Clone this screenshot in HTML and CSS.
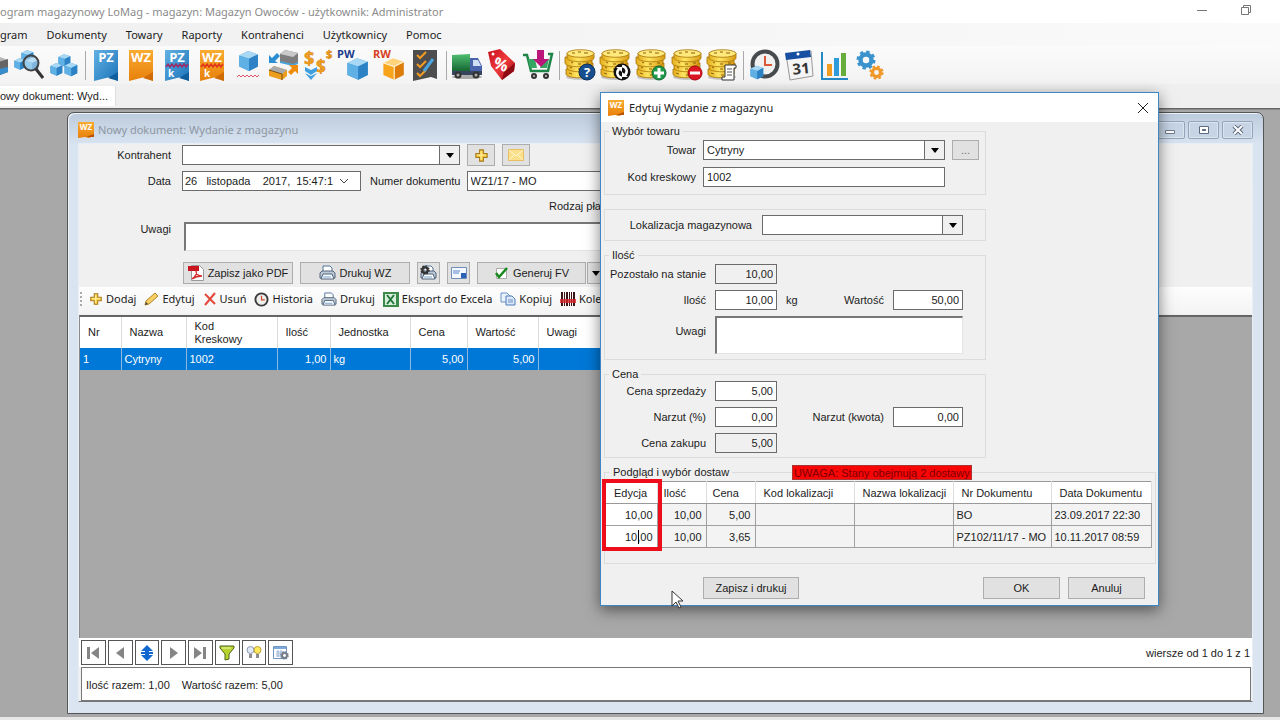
FILE: index.html
```html
<!DOCTYPE html>
<html lang="pl">
<head>
<meta charset="utf-8">
<title>LoMag</title>
<link rel="stylesheet" href="styles.css">
</head>
<body>
<svg class="sprites" aria-hidden="true">
  <defs>
    <linearGradient id="gBlue" x1="0" y1="0" x2="1" y2="1"><stop offset="0" stop-color="#63b1e4"/><stop offset="1" stop-color="#1a73b8"/></linearGradient>
    <linearGradient id="gOrange" x1="0" y1="0" x2="0" y2="1"><stop offset="0" stop-color="#f9ab32"/><stop offset="1" stop-color="#e8800a"/></linearGradient>
    <linearGradient id="gCoin" x1="0" y1="0" x2="1" y2="0"><stop offset="0" stop-color="#e2ac1c"/><stop offset=".4" stop-color="#ffe561"/><stop offset="1" stop-color="#d79a10"/></linearGradient>
    <linearGradient id="gGreen" x1="0" y1="0" x2="0" y2="1"><stop offset="0" stop-color="#4fbf71"/><stop offset="1" stop-color="#12612f"/></linearGradient>
    <linearGradient id="gRed" x1="0" y1="0" x2="1" y2="1"><stop offset="0" stop-color="#c80f1c"/><stop offset=".5" stop-color="#ef3b3f"/><stop offset="1" stop-color="#9d0711"/></linearGradient>
    <symbol id="cube" viewBox="0 0 20 20"><path d="M10 1 19 4v11l-8 4-9-4V5z" fill="#4c9dd6"/><path d="M10 1 19 4l-8 4-9-3z" fill="#a9d8f4"/><path d="M2 5l9 3v11l-9-4z" fill="#5fb0e4"/><path d="M11 8l8-4v11l-8 4z" fill="#2c82c4"/></symbol>
    <symbol id="cubeo" viewBox="0 0 20 20"><path d="M10 1 19 4l-8 4-9-3z" fill="#ffd27c"/><path d="M2 5l9 3v11l-9-4z" fill="#f7a31c"/><path d="M11 8l8-4v11l-8 4z" fill="#dd7c08"/><path d="M2 5l9 3 8-4M11 8v11" fill="none" stroke="#fff0cf"/></symbol>
    <symbol id="flagb" viewBox="0 0 24 31"><path d="M0 0h24v31l-8-4-16 4z" fill="url(#gBlue)"/><path d="M14 28l10-6v9z" fill="#0f5f9f"/></symbol>
    <symbol id="flago" viewBox="0 0 24 31"><path d="M0 0h24v31l-8-4-16 4z" fill="url(#gOrange)"/><path d="M14 28l10-6v9z" fill="#cf6c05"/></symbol>
    <symbol id="coins" viewBox="0 0 32 32"><ellipse cx="16" cy="28" rx="14" ry="3" fill="#999" opacity=".5"/><g fill="url(#gCoin)" stroke="#a87409" stroke-width=".8"><path d="M2 20v5c0 5 26 5 26 0v-5z"/><path d="M3 14v5c0 5 26 5 26 0v-5z"/><path d="M1 8v6c0 5 27 5 27 0V8z"/><path d="M3 4v5c0 5 27 5 27 0V4z"/><ellipse cx="16.500" cy="4.500" rx="13.500" ry="3.800" fill="#ffe97c"/></g><path d="M8 4h3m3-1h3m3 1h4M7 13l2 1m5 1h3m5-1h3M6 18l2 1m6 1h3m6-1h2M5 24l3 1m7 1h3m4-1h3" stroke="#8b5f05" fill="none"/></symbol>
    <symbol id="wz" viewBox="0 0 16 16"><path d="M0 0h16v14l-5 2-4-1-7 1z" fill="url(#gOrange)"/><path d="M8 15l8-3v3z" fill="#b65400"/><text x="8" y="8" class="svg-bold" font-size="8" text-anchor="middle" fill="#fff">WZ</text></symbol>
    <symbol id="plus" viewBox="0 0 16 16"><path d="M6 2h4v4h4v4h-4v4H6v-4H2V6h4z" fill="#fbd44c" stroke="#a9791a" stroke-width="1.200"/><path d="M7.500 3.500v9M3.500 7.500h9" stroke="#fff0a8"/></symbol>
    <symbol id="printer" viewBox="0 0 17 16"><path d="M4 7V1h7l2 2v4" fill="#fff" stroke="#54749a"/><path d="M1 8l2-2h11l2 2v5H1z" fill="#bdc9d6" stroke="#53657b"/><path d="M4 9h9l2 5H2z" fill="#f6fbff" stroke="#53657b"/><path d="M4 12h8" stroke="#7ea3ca"/></symbol>
    <symbol id="clock" viewBox="0 0 16 16"><circle cx="8" cy="8" r="6.500" fill="#eee" stroke="#3a3a3a" stroke-width="2"/><path d="M8 4v4.500h3.500" fill="none" stroke="#d14a28" stroke-width="1.300"/></symbol>
    <symbol id="gear" viewBox="0 0 20 20"><circle cx="10" cy="10" r="5.500" fill="none" stroke="currentColor" stroke-width="4.500"/><circle cx="10" cy="10" r="8.200" fill="none" stroke="currentColor" stroke-width="2.600" stroke-dasharray="3.400 3.040"/></symbol>
  </defs>
</svg>

<div class="app">
  <header class="titlebar">
    <span>ogram magazynowy LoMag - magazyn: Magazyn Owoców - użytkownik: Administrator</span>
    <div class="sysbuttons">
      <button aria-label="Minimalizuj"><svg width="12" height="12"><path d="M1 6.500h10" stroke="#777"/></svg></button>
      <button aria-label="Przywróć"><svg width="12" height="12" fill="none" stroke="#777"><path d="M1.500 3.500h7v7h-7zM3.500 3V1.500h7v7H9"/></svg></button>
    </div>
  </header>

  <nav class="menu">
    <button>gram</button><button>Dokumenty</button><button>Towary</button><button>Raporty</button><button>Kontrahenci</button><button>Użytkownicy</button><button>Pomoc</button>
  </nav>

  <div class="toolbar">
    <div class="tools tools-stock">
      <button aria-label="Magazyn"><svg width="32" height="32"><path d="M4 11l14-5 13 5v12l-13 5-14-7z" fill="#b5b5b5"/><path d="M18 14l13-4v13l-13 5z" fill="#666"/><path d="M18 21l13-3v5l-13 5z" fill="#398fce"/></svg></button>
      <button aria-label="Szukaj"><svg width="32" height="32"><use href="#cube" x="8" y="0" width="14" height="15"/><use href="#cube" x="1" y="8" width="13" height="14"/><use href="#cube" x="12" y="8" width="15" height="15"/><circle cx="19" cy="14" r="7.500" fill="#c8e3f388" stroke="#444" stroke-width="2"/><path d="M24 20l7 9" stroke="#333" stroke-width="3"/></svg></button>
      <button aria-label="Towary"><svg width="32" height="32"><use href="#cube" x="9" y="4" width="14" height="15"/><use href="#cube" x="1" y="13" width="14" height="15"/><use href="#cube" x="15" y="13" width="15" height="15"/></svg></button>
    </div>
    <i class="sep"></i>
    <div class="tools tools-docs">
      <button aria-label="PZ"><svg width="24" height="37" viewBox="0 -3 24 37"><use href="#flagb" width="24" height="31"/><text x="12" y="12" class="svg-bold" font-size="13" text-anchor="middle" fill="#fff">PZ</text></svg></button>
      <button aria-label="WZ"><svg width="24" height="37" viewBox="0 -3 24 37"><use href="#flago" width="24" height="31"/><text x="12" y="12" class="svg-bold" font-size="13" text-anchor="middle" fill="#fff">WZ</text></svg></button>
      <button aria-label="PZ k"><svg width="24" height="37" viewBox="0 -3 24 37"><use href="#flagb" width="24" height="31"/><text x="12" y="12" class="svg-bold" font-size="13" text-anchor="middle" fill="#fff">PZ</text><path d="M1 17l2-3 2 3 2-3 2 3 2-3 2 3 2-3 2 3 2-3 2 3 2-3" fill="none" stroke="#9a2c67" stroke-width="1.500"/><text x="6" y="27" class="svg-bold" font-size="10" text-anchor="middle" fill="#fff">k</text></svg></button>
      <button aria-label="WZ k"><svg width="24" height="37" viewBox="0 -3 24 37"><use href="#flago" width="24" height="31"/><text x="12" y="12" class="svg-bold" font-size="13" text-anchor="middle" fill="#fff">WZ</text><path d="M1 17l2-3 2 3 2-3 2 3 2-3 2 3 2-3 2 3 2-3 2 3 2-3" fill="none" stroke="#e0341c" stroke-width="1.500"/><text x="7" y="27" class="svg-bold" font-size="10" text-anchor="middle" fill="#fff">k</text></svg></button>
      <button aria-label="Korekta stanu"><svg width="24" height="32"><use href="#cube" x="1" y="1" width="22" height="22"/><path d="M1 28l2-2 2 2 2-2 2 2 2-2 2 2 2-2 2 2 2-2 2 2 2-2" fill="none" stroke="#d9526a"/></svg></button>
      <button aria-label="Przesunięcie"><svg width="32" height="32"><path d="M13 5l5-4 13 3v9l-5 3-13-3z" fill="#7d7d7d"/><path d="M13 5l5-4 13 3-5 4z" fill="#c9c9c9"/><path d="M13 12l13 3 5-2v2l-5 2-13-3z" fill="#4ba1d9"/><path d="M2 21l5-4 13 4v6l-5 4-13-4z" fill="#ed9d1b"/><path d="M2 21l5-4 13 4-5 4z" fill="#aaa"/><path d="M2 21l13 4v6" fill="none" stroke="#775014"/><path d="M2 14V6l3 3 5-5 3 3-5 5 3 2z" fill="#2a8ed0"/><path d="M31 16v9l-3-3-4 4-3-3 4-4-3-3z" fill="#f08c0a"/></svg></button>
      <button aria-label="Ceny"><svg width="30" height="38" viewBox="0 -3 30 38"><g class="svg-bold" fill="#f0a01e" stroke="#d5810b" stroke-width=".5"><text x="0" y="16" font-size="18">$</text><text x="12" y="24" font-size="17">$</text><text x="22" y="9" font-size="11">$</text></g><path d="M1 18l6 3 6-3v4l-6 4-6-4zM1 24l6 3 6-3-6 7z" fill="#3f9fdf"/></svg></button>
      <button aria-label="PW"><svg width="34" height="38" viewBox="0 -3 34 38"><use href="#cube" x="8" y="8" width="24" height="24"/><text x="0" y="9" class="svg-bold" font-size="11" fill="#1c3b8d">PW</text></svg></button>
      <button aria-label="RW"><svg width="34" height="38" viewBox="0 -3 34 38"><use href="#cubeo" x="8" y="8" width="24" height="24"/><text x="0" y="9" class="svg-bold" font-size="11" fill="#d7401c">RW</text></svg></button>
      <button aria-label="Inwentaryzacja"><svg width="24" height="31"><path d="M0 0h24v29l-6-2-18 4z" fill="#4d4d4f"/><path d="M4 5l3 3 6-6M4 14l3 3 6-6M4 23l3 3 6-6" fill="none" stroke="#f19b22" stroke-width="2"/><path d="M20 9L11 21" stroke="#49a4e0" stroke-width="3"/></svg></button>
    </div>
    <i class="sep"></i>
    <div class="tools tools-trade">
      <button aria-label="Dostawa"><svg width="32" height="32"><ellipse cx="16" cy="28" rx="15" ry="2" fill="#aaa"/><path d="M1 6l18-1v18H1z" fill="url(#gGreen)"/><path d="M19 9h8l4 8v8H19z" fill="#4a63ad"/><path d="M22 11h5l3 6h-8z" fill="#cfe0f5"/><path d="M1 22h30v4H1z" fill="#37465c"/><circle cx="7" cy="26" r="3.500" fill="#333"/><circle cx="7" cy="26" r="1.500" fill="#aaa"/><circle cx="25" cy="26" r="3.500" fill="#333"/><circle cx="25" cy="26" r="1.500" fill="#aaa"/></svg></button>
      <button aria-label="Rabaty"><svg width="30" height="32"><path d="M1 3L13 0l15 14-1 8-12 9L4 17z" fill="url(#gRed)"/><path d="M15 31l12-9 1-8-11 9z" fill="#8e0a14"/><circle cx="6" cy="5" r="1.500" fill="#fff"/><text x="14" y="21" class="svg-bold" font-size="16" text-anchor="middle" fill="#fff" transform="rotate(20 14 15)">%</text></svg></button>
      <button aria-label="Zakup"><svg width="32" height="32"><path d="M1 6h4l4 16h17l4-17h-4" fill="none" stroke="#1e8547" stroke-width="2.500"/><path d="M6 10h7l2 9H8zM27 10h-6l-3 9h7z" fill="#36a663"/><path d="M15 1h7v9h5l-8 8-8-8h4z" fill="#bb1679"/><circle cx="12" cy="27" r="3" fill="#333"/><circle cx="24" cy="27" r="3" fill="#333"/><circle cx="12" cy="27" r="1" fill="#ccc"/><circle cx="24" cy="27" r="1" fill="#ccc"/></svg></button>
    </div>
    <i class="sep"></i>
    <div class="tools tools-coins">
      <button aria-label="Saldo"><svg width="32" height="32"><use href="#coins"/><circle cx="23" cy="23" r="8" fill="#174f8f" stroke="#0d2e5a"/><text x="23" y="28" class="svg-bold" font-size="13" text-anchor="middle" fill="#fff">?</text></svg></button>
      <button aria-label="Odśwież"><svg width="32" height="32"><use href="#coins"/><circle cx="23" cy="23" r="8.500" fill="#111"/><path d="M23 29c-5-1-6-6-3-9M23 17c5 1 6 6 3 9" fill="none" stroke="#fff" stroke-width="2.500"/><path d="M17 18h6v5zM29 28h-6v-5z" fill="#fff"/></svg></button>
      <button aria-label="Dodaj wpłatę"><svg width="32" height="32"><use href="#coins"/><circle cx="24" cy="24" r="7" fill="#1f9a4b" stroke="#0e6b30"/><path d="M24 19v10M19 24h10" stroke="#fff" stroke-width="3"/></svg></button>
      <button aria-label="Usuń wpłatę"><svg width="32" height="32"><use href="#coins"/><circle cx="24" cy="24" r="7" fill="#dd1825" stroke="#a70812"/><path d="M19 24h10" stroke="#fff" stroke-width="3"/></svg></button>
      <button aria-label="Raport wpłat"><svg width="32" height="32"><use href="#coins"/><path d="M19 16h11v3h-2v12H16v-3h3z" fill="#fff" stroke="#333"/><path d="M21 20h5m-5 3h5m-5 3h5" stroke="#555"/></svg></button>
    </div>
    <i class="sep"></i>
    <div class="tools tools-info">
      <button aria-label="Historia"><svg width="32" height="32"><circle cx="17" cy="15" r="12.500" fill="#f1f1f1" stroke="#484b4e" stroke-width="4"/><path d="M17 7v9h7" fill="none" stroke="#dc5937" stroke-width="2"/><use href="#cube" x="1" y="16" width="15" height="15"/></svg></button>
      <button aria-label="Kalendarz"><svg width="29" height="31"><path d="M1 4l25-3 2 25-23 4z" fill="#f5f5f5" stroke="#999"/><path d="M0 3l25-3 1 7-25 3z" fill="#194fa2"/><circle cx="13" cy="4" r="1.500" fill="#fff"/><text x="16" y="24" class="svg-bold" font-size="15" text-anchor="middle" fill="#333" transform="rotate(-6 16 18)">31</text></svg></button>
      <button aria-label="Wykresy"><svg width="28" height="29"><path d="M1 1v27h26" fill="none" stroke="#238ac5" stroke-width="2"/><path d="M6 13h5v12H6z" fill="#f29c20"/><path d="M13 7h5v18h-5z" fill="#2f9bda"/><path d="M20 2h5v23h-5z" fill="#67ad3b"/></svg></button>
      <button aria-label="Ustawienia"><svg width="30" height="32"><use href="#gear" x="1" y="1" width="20" height="20" color="#3a93cd"/><use href="#gear" x="14" y="16" width="15" height="15" color="#f0992a"/></svg></button>
    </div>
  </div>

  <div class="tabs"><button class="tab">owy dokument: Wyd...</button></div>

  <main class="workspace">
    <section class="child">
      <header class="child-title">
        <svg width="16" height="16"><use href="#wz"/></svg><span>Nowy dokument: Wydanie z magazynu</span>
        <div class="child-buttons">
          <button aria-label="Minimalizuj"><svg width="12" height="10"><path d="M1.500 5.500h9v3h-9z" fill="#fff" stroke="#6d7b8d"/></svg></button>
          <button aria-label="Maksymalizuj"><svg width="12" height="10"><path d="M1.500 1.500h9v7h-9z" fill="#fff" stroke="#5d6b7d"/><path d="M4.500 4.500h3v1h-3z" stroke="#5d6b7d"/></svg></button>
          <button aria-label="Zamknij"><svg width="12" height="10"><path d="M2 1l8 8M10 1L2 9" stroke="#5d6b7d" stroke-width="4"/><path d="M2 1l8 8M10 1L2 9" stroke="#fff" stroke-width="2"/></svg></button>
        </div>
      </header>

      <div class="client">
        <form class="doc">
          <div class="row">
            <label for="kontrahent">Kontrahent</label>
            <span class="combo w-customer"><select id="kontrahent"><option></option></select></span>
            <button type="button" class="btn square" aria-label="Dodaj kontrahenta"><svg width="15" height="15"><use href="#plus"/></svg></button>
            <button type="button" class="btn square" aria-label="Wyślij"><svg width="16" height="12"><path d="M.500.500h15v11H.500z" fill="#fbe08c" stroke="#e5bf60"/><path d="M1 1l7 6 7-6M1 11l5-5M15 11l-5-5" fill="none" stroke="#fff6d2"/></svg></button>
          </div>
          <div class="row">
            <label for="data">Data</label>
            <span class="datebox"><input id="data" value="26   listopada    2017,  15:47:1"><svg width="10" height="6"><path d="M1 1l4 4 4-4" fill="none" stroke="#444"/></svg></span>
            <label for="numer" class="lbl-number">Numer dokumentu</label>
            <input id="numer" class="field w-number" value="WZ1/17 - MO">
          </div>
          <div class="row row-pay"><span>Rodzaj płatności</span></div>
          <div class="row row-notes">
            <label for="uwagi">Uwagi</label>
            <textarea id="uwagi" class="notes"></textarea>
          </div>
          <div class="row row-actions">
            <button type="button" class="btn w-pdf"><svg width="16" height="16"><path d="M3.500.500h8l4 4v11h-12z" fill="#fff" stroke="#999"/><path d="M0 1h11v5H0z" fill="#c9151e"/><path d="M4 14c4-3 5-6 4-8 0 4 3 5 6 5-4 0-7 1-10 3z" fill="none" stroke="#d62a2a" stroke-width="1.300"/></svg>Zapisz jako PDF</button>
            <button type="button" class="btn w-print"><svg width="17" height="16"><use href="#printer"/></svg>Drukuj WZ</button>
            <button type="button" class="btn w-icon" aria-label="Ustawienia wydruku"><svg width="17" height="16"><use href="#printer"/><use href="#gear" x="0" y="0" width="10" height="10" color="#333"/></svg></button>
            <button type="button" class="btn w-icon" aria-label="Wyślij pocztą"><svg width="16" height="12"><path d="M.500.500h15v11H.500z" fill="#f4f9ff" stroke="#6f8fb8"/><path d="M2 4h7M2 6h6" stroke="#5585c7"/><path d="M10 6h5v5h-5z" fill="#2c62b5"/></svg></button>
            <span class="split"><button type="button" class="btn w-fv"><svg width="15" height="14"><path d="M2.500 2.500h10v10h-10z" fill="#fff" stroke="#aaa"/><path d="M2 7l3 4 8-9" fill="none" stroke="#188a1d" stroke-width="2.500"/></svg>Generuj FV</button><button type="button" class="btn w-drop" aria-label="Więcej"><svg width="8" height="5"><path d="M0 0h8L4 5z"/></svg></button></span>
          </div>
        </form>

        <div class="minibar">
          <i class="grip"></i>
          <button><svg width="14" height="14"><use href="#plus"/></svg>Dodaj</button>
          <button><svg width="15" height="14"><path d="M1 13l1-4 9-8 3 3-9 8z" fill="#f8cf63" stroke="#b08326"/><path d="M1 13l1-3 2 2z" fill="#444"/></svg>Edytuj</button>
          <button><svg width="14" height="14"><path d="M2 2l10 10M12 1L2 13" stroke="#e4483a" stroke-width="2" fill="none"/></svg>Usuń</button>
          <button><svg width="15" height="15"><use href="#clock"/></svg>Historia</button>
          <button><svg width="16" height="15"><use href="#printer"/></svg>Drukuj</button>
          <button><svg width="16" height="15"><path d="M0 0h16v15H0z" fill="#3d8b4a"/><path d="M2 2h11v11H2z" fill="#d9eedb"/><path d="M4 3l7 9M11 3l-7 9" stroke="#23773a" stroke-width="2"/></svg>Eksport do Excela</button>
          <button><svg width="16" height="14"><path d="M1 1h6l3 3v6H1z" fill="#eaf2fc" stroke="#6a90c4"/><path d="M6 4h6l3 3v6H6z" fill="#dce9fa" stroke="#4f7bb8"/><path d="M8 8h5m-5 2h5" stroke="#6a90c4"/></svg>Kopiuj</button>
          <button><svg width="16" height="14"><path d="M1 0h2v14H1zM4 0h1v14H4zM6 0h2v14H6zM9 0h1v14H9zM11 0h1v14h-1zM13 0h2v14h-2z" fill="#3c1414"/><path d="M0 7h16v4H0z" fill="#d8232b" opacity=".8"/></svg>Kolektor</button>
        </div>

        <div class="gridarea">
          <table class="items">
            <colgroup><col class="c41"><col class="c65"><col class="c91"><col class="c53"><col class="c80"><col class="c57"><col class="c71"><col class="c120"></colgroup>
            <thead><tr><th>Nr</th><th>Nazwa</th><th>Kod<br>Kreskowy</th><th>Ilość</th><th>Jednostka</th><th>Cena</th><th>Wartość</th><th>Uwagi</th></tr></thead>
            <tbody><tr><td>1</td><td>Cytryny</td><td>1002</td><td class="num">1,00</td><td>kg</td><td class="num">5,00</td><td class="num">5,00</td><td></td></tr></tbody>
          </table>
        </div>

        <div class="pager">
          <div class="navs">
            <button aria-label="Pierwszy"><svg width="16" height="16" fill="#858585"><path d="M2 2h3v12H2zM14 2v12L6 8z"/></svg></button>
            <button aria-label="Poprzedni"><svg width="16" height="16" fill="#858585"><path d="M12 2v12L4 8z"/></svg></button>
            <button aria-label="Przejdź"><svg width="16" height="16" fill="#0f67cf"><path d="M8 0l6 6h-4v1H6V6H2zM8 16l6-6h-4V9H6v1H2zM2 7h12v2H2z"/></svg></button>
            <button aria-label="Następny"><svg width="16" height="16" fill="#858585"><path d="M4 2v12l8-6z"/></svg></button>
            <button aria-label="Ostatni"><svg width="16" height="16" fill="#858585"><path d="M11 2h3v12h-3zM2 2v12l8-6z"/></svg></button>
            <button aria-label="Filtr"><svg width="16" height="16"><path d="M1 1h14v2l-5 6v5l-4 1V9L1 3z" fill="#b9d331" stroke="#4c6415"/><path d="M3 3h9" stroke="#f3fbb0"/></svg></button>
            <button aria-label="Podświetl"><svg width="16" height="16"><circle cx="4.500" cy="5" r="3.500" fill="#dfe8f7" stroke="#8e9ab1"/><path d="M3 9h3v4H3z" fill="#8e8e8e"/><circle cx="11.500" cy="5" r="3.500" fill="#ffe95c" stroke="#bfa031"/><path d="M10 9h3v4h-3z" fill="#8e8e8e"/></svg></button>
            <button aria-label="Kolumny"><svg width="16" height="16"><path d="M.500 1.500h13v12H.500z" fill="#fff" stroke="#6d95c5"/><path d="M1 3h12" stroke="#7fa9da" stroke-width="2"/><path d="M3 7h9M3 9h6M3 11h5M5 5v7M8 5v7" stroke="#9ab5d5"/><use href="#gear" x="7" y="6" width="9" height="9" color="#787f8c"/></svg></button>
          </div>
          <span>wiersze od 1 do 1 z 1</span>
        </div>
        <div class="summary"><span>Ilość razem: 1,00</span><span>Wartość razem: 5,00</span></div>
      </div>
    </section>
  </main>
</div>

<section class="dialog" role="dialog" aria-label="Edytuj Wydanie z magazynu">
  <header class="dialog-title">
    <svg width="16" height="16"><use href="#wz"/></svg><span>Edytuj Wydanie z magazynu</span>
    <button aria-label="Zamknij"><svg width="12" height="12"><path d="M1 1l10 10M11 1L1 11" stroke="#222" fill="none"/></svg></button>
  </header>
  <div class="dialog-body">
    <fieldset class="group">
      <legend>Wybór towaru</legend>
      <div class="product">
        <label for="towar">Towar</label>
        <span class="combo"><select id="towar"><option>Cytryny</option></select></span>
        <button class="btn dots">...</button>
        <label for="kod">Kod kreskowy</label>
        <input id="kod" class="field" value="1002">
      </div>
    </fieldset>

    <fieldset class="group location">
      <label for="lok">Lokalizacja magazynowa</label>
      <span class="combo"><select id="lok"><option></option></select></span>
    </fieldset>

    <fieldset class="group">
      <legend>Ilość</legend>
      <div class="amounts stock">
        <label for="stan">Pozostało na stanie</label><input id="stan" class="field num" value="10,00" readonly>
        <label for="ilosc" class="new">Ilość</label><input id="ilosc" class="field num" value="10,00"><span>kg</span><label for="wartosc">Wartość</label><input id="wartosc" class="field num" value="50,00">
        <label for="uwagi2" class="new notes-label">Uwagi</label><textarea id="uwagi2" class="notes"></textarea>
      </div>
    </fieldset>

    <fieldset class="group">
      <legend>Cena</legend>
      <div class="amounts">
        <label for="sprz">Cena sprzedaży</label><input id="sprz" class="field num" value="5,00">
        <label for="narzut" class="new">Narzut (%)</label><input id="narzut" class="field num" value="0,00"><span></span><label for="kwota">Narzut (kwota)</label><input id="kwota" class="field num" value="0,00">
        <label for="zakup" class="new">Cena zakupu</label><input id="zakup" class="field num" value="5,00" readonly>
      </div>
    </fieldset>

    <fieldset class="group supplies">
      <legend>Podgląd i wybór dostaw</legend>
      <strong class="warning">UWAGA: Stany obejmują 2 dostawy</strong>
      <table>
        <colgroup><col class="c51"><col class="c49"><col class="c49"><col class="c99"><col class="c99"><col class="c98"><col class="c100"></colgroup>
        <thead><tr><th>Edycja</th><th class="tight">Ilość</th><th class="tight">Cena</th><th>Kod lokalizacji</th><th>Nazwa lokalizacji</th><th>Nr Dokumentu</th><th>Data Dokumentu</th></tr></thead>
        <tbody>
          <tr><td class="num edit">10,00</td><td class="num">10,00</td><td class="num">5,00</td><td></td><td></td><td>BO</td><td>23.09.2017 22:30</td></tr>
          <tr><td class="num edit"><span class="caret">10,00</span></td><td class="num">10,00</td><td class="num">3,65</td><td></td><td></td><td>PZ102/11/17 - MO</td><td>10.11.2017 08:59</td></tr>
        </tbody>
      </table>
      <div class="highlight"></div>
    </fieldset>

    <footer class="dialog-actions">
      <button class="btn w-save">Zapisz i drukuj</button>
      <button class="btn w-ok">OK</button>
      <button class="btn w-ok">Anuluj</button>
    </footer>
  </div>
  <svg class="pointer" width="13" height="20"><path d="M1 1v15l4-4 3 6 2-1-3-6h5z" fill="#fff" stroke="#333"/></svg>
</section>
</body>
</html>
```
FILE: styles.css
```css
* { box-sizing: border-box; }
body { margin: 0; height: 100vh; overflow: hidden; background: #f0f0f0; color: #1c1c1c; font: 11px/14px "Liberation Sans", Arial, sans-serif; }
button, input, select, textarea { font: inherit; color: inherit; margin: 0; padding: 0; border: 0; background: none; border-radius: 0; outline: none; resize: none; }
svg { display: block; flex: none; }
.sprites { position: absolute; width: 0; height: 0; }
.svg-bold { font-family: "Open Sans", "Noto Sans", sans-serif; font-weight: 700; }

.app { display: flex; flex-direction: column; height: 100vh; border-bottom: 3px solid #e6e6e6; }
.titlebar { display: flex; align-items: center; justify-content: space-between; height: 23px; background: #fff; color: #8b8b8b; font: 11px/16px "Noto Sans", sans-serif; }
.sysbuttons { display: flex; gap: 32px; padding: 0 28px 4px 0; }
.menu { display: flex; align-items: center; gap: 19px; height: 23px; background: linear-gradient(90deg, #f0f0f0, #fafafa); font: 11px/16px "Noto Sans", sans-serif; white-space: nowrap; }
.toolbar { display: flex; align-items: center; height: 38px; background: linear-gradient(#fbfbfb, #f3f3f3); }
.tools { display: grid; grid-auto-flow: column; grid-auto-columns: 1fr; align-items: center; }
.tools button { display: flex; justify-content: center; }
.tools-stock { width: 107px; margin-left: -25px; }
.tools-docs { width: 355px; }
.tools-trade { width: 107px; }
.tools-coins { width: 178px; }
.tools-info { width: 142px; }
.sep { width: 1px; height: 29px; margin: 0 2px 0 3px; background: #aaa; }
.tabs { display: flex; align-items: flex-end; height: 25px; padding-bottom: 2px; background: #efefef; border-bottom: 1px solid #666; }
.tab { height: 20px; padding: 0 7px 0 0; background: #fff; border-right: 1px solid #ddd; color: #222; }

.workspace { flex: 1; min-height: 0; display: flex; padding: 2px 16px 3px 67px; background: #a8a8a8; border-top: 1px solid #888; }
.child { flex: 1; min-width: 0; display: flex; flex-direction: column; padding: 0 10px 11px; border: 1px solid #555; border-radius: 7px 7px 0 0; background: linear-gradient(#bccbdc, #d9e4f1 32px, #dbe5f1); box-shadow: inset 1px 1px #eef4fa; }
.child-title { display: flex; align-items: center; gap: 4px; height: 30px; padding-top: 4px; color: #8d97a3; font: 11px/16px "Noto Sans", sans-serif; }
.child-buttons { display: flex; gap: 3px; margin-left: auto; }
.child-buttons button { width: 31px; height: 18px; display: flex; align-items: center; justify-content: center; border: 1px solid #94a5bb; border-radius: 2px; background: #c6d4e5; box-shadow: inset 0 0 0 1px #dbe5f0; }
.client { flex: 1; min-height: 0; display: flex; flex-direction: column; background: #f0f0f0; border: 1px solid #e8eef5; border-bottom-color: #777; }

.doc { display: flex; flex-direction: column; gap: 6px; padding: 1px 0 3px; }
.row { display: flex; align-items: center; height: 20px; }
.row > label { width: 92px; margin-right: 11px; text-align: right; }
.field { height: 20px; padding: 0 3px; border: 1px solid #6b6b6b; background: #fff; }
.field[readonly] { background: #f0f0f0; }
.num { text-align: right; }
.combo { position: relative; display: flex; height: 20px; border: 1px solid #6b6b6b; background: #fff; }
.combo select { flex: 1; min-width: 0; appearance: none; padding: 0 22px 0 3px; }
.combo::before { content: ""; position: absolute; right: 0; top: 0; bottom: 0; width: 19px; background: #f0f0f0; border-left: 1px solid #6b6b6b; pointer-events: none; }
.combo::after { content: ""; position: absolute; right: 5px; top: 7px; border: 4px solid transparent; border-top: 5px solid #000; border-bottom: 0; pointer-events: none; }
.btn { display: flex; align-items: center; justify-content: center; gap: 4px; height: 22px; background: #e1e1e1; border: 1px solid #adadad; white-space: nowrap; }
.square { width: 28px; margin-left: 7px; }
.w-customer { width: 278px; }
.datebox { display: flex; align-items: center; width: 179px; height: 20px; padding: 0 11px 0 2px; border: 1px solid #6b6b6b; background: #fff; }
.datebox input { flex: 1; min-width: 0; }
.row > .lbl-number { width: auto; margin: 0 6px 0 9px; }
.w-number { width: 220px; }
.row-pay { padding: 0 0 3px 470px; height: 19px; align-items: flex-end; }
.row-notes { height: 29px; align-items: stretch; }
.row-notes > label { margin-right: 13px; }
.notes { border: 1px solid #e3e3e3; border-top: 2px solid #777; border-left: 2px solid #777; background: #fff; }
.row-notes .notes { width: 600px; }
.row-actions { height: 27px; align-items: flex-end; padding-left: 104px; gap: 7px; }
.w-pdf { width: 110px; }
.w-print { width: 110px; }
.w-icon { width: 23px; }
.split { display: flex; gap: 1px; }
.w-fv { width: 109px; }
.w-drop { width: 18px; }

.minibar { display: flex; align-items: center; gap: 8px; height: 27px; padding: 0 0 3px 1px; background: linear-gradient(#fdfdfd, #f4f4f4); font: 11px/16px "Noto Sans", sans-serif; white-space: nowrap; }
.minibar button { display: flex; align-items: center; gap: 3px; }
.minibar .grip { width: 2px; height: 15px; margin-right: -1px; background: repeating-linear-gradient(#aaa 0 2px, transparent 2px 4px); }

.gridarea { flex: 1; min-height: 0; margin-top: 1px; border-top: 2px solid #666; border-left: 1px solid #888; background: #a8a8a8; }
table { border-collapse: collapse; table-layout: fixed; }
.items { width: 578px; background: #fff; }
th { font-weight: 400; text-align: left; padding: 0 0 0 8px; white-space: nowrap; }
.items th { height: 31px; line-height: 13px; border-right: 1px solid #dcdcdc; }
.items td { height: 22px; padding: 0 3px; color: #fff; background: #0078d7; border-right: 1px solid #8eb7dd; }
.c41 { width: 41px; } .c65 { width: 65px; } .c91 { width: 91px; } .c53 { width: 53px; } .c80 { width: 80px; } .c57 { width: 57px; } .c71 { width: 71px; } .c120 { width: 120px; }
.c51 { width: 51px; } .c49 { width: 49px; } .c99 { width: 99px; } .c98 { width: 98px; } .c100 { width: 100px; }

.pager { display: flex; align-items: center; justify-content: space-between; height: 29px; padding: 0 2px; background: #fff; }
.navs { display: grid; grid-template-columns: repeat(8, 1fr); gap: 2px; width: 212px; }
.navs button { display: flex; align-items: center; justify-content: center; height: 25px; border: 1px solid #555; background: #fff; }
.summary { display: flex; align-items: center; gap: 12px; height: 34px; margin: 0 1px 0 2px; padding: 2px 4px 0; background: #fff; border: 1px solid #777; }

.dialog { position: absolute; left: 600px; top: 92px; width: 559px; background: #f0f0f0; border: 1px solid #3c87c4; box-shadow: 0 4px 14px rgba(0, 0, 0, .5); }
.dialog-title { display: flex; align-items: center; gap: 5px; height: 29px; padding: 0 9px 0 7px; background: #fff; color: #222; font: 11px/16px "Noto Sans", sans-serif; }
.dialog-title button { margin-left: auto; }
.dialog-body { display: flex; flex-direction: column; padding: 2px 3px 6px; }
.group { position: relative; width: 382px; min-width: 0; margin: 0; padding: 0; border: 1px solid #dcdcdc; }
.group legend { margin-left: 4px; padding: 0 3px; line-height: 14px; }
.product { display: grid; grid-template-columns: 91px 242px 27px; gap: 7px; align-items: center; padding: 2px 0 7px; }
.product label, .amounts label { text-align: right; }
.dots { height: 20px; color: #777; }
.location { display: flex; align-items: center; justify-content: flex-end; gap: 10px; margin-top: 14px; padding: 5px 22px; }
.location .combo { width: 201px; }
.amounts { display: grid; grid-template-columns: 101px 62px 12px 77px 70px; column-gap: 9px; row-gap: 6px; align-items: center; padding: 0 0 4px; }
.stock { padding: 2px 0 5px; }
.amounts .new { grid-column: 1; }
.amounts .notes { grid-column: 2 / -1; height: 38px; }
.amounts .field { min-width: 0; width: 100%; }
.notes-label { align-self: start; padding-top: 8px; }
.group + .group:not(.location) { margin-top: 7px; }
.supplies { width: 552px; padding: 0 1px 15px; }
.supplies table { width: 545px; margin-top: 2px; border-top: 1px solid #999; }
.supplies th { height: 22px; background: #fff; border-right: 1px solid #ddd; border-bottom: 1px solid #999; }
.supplies th.tight { padding-left: 6px; }
.supplies td { height: 22px; padding: 0 4px 0 3px; white-space: nowrap; background: #f3f3f3; border: 1px solid #a0a0a0; border-left: 0; }
.supplies td.edit { background: #fff; }
.caret { position: relative; }
.caret::after { content: ""; position: absolute; left: 13px; top: -1px; width: 1px; height: 14px; background: #000; }
.warning { position: absolute; left: 187px; top: -14px; width: 180px; height: 15px; padding-left: 1px; background: #f80505; border: 1px solid #a33; color: #7c0000; font-weight: 400; line-height: 14px; white-space: nowrap; }
.highlight { position: absolute; left: -3px; top: 0; width: 60px; height: 72px; border: 4px solid #ee0d1a; }
.dialog-actions { display: flex; gap: 8px; margin-top: 13px; padding: 0 10px 0 99px; }
.w-save { width: 96px; margin-right: auto; }
.w-ok { width: 77px; }
.pointer { position: absolute; left: 70px; top: 497px; }
```
